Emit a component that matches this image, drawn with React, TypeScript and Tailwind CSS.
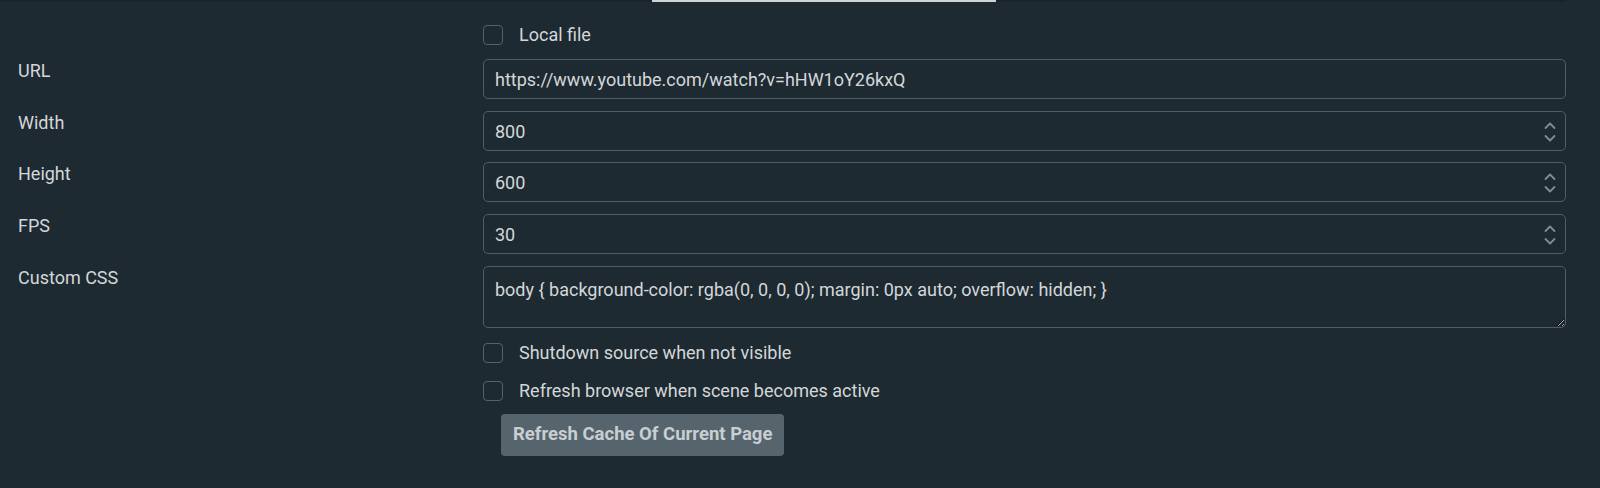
import React from "react";

function Checkbox() {
  return <span className="block w-[20px] h-[20px] rounded-[4px] border-[1.5px] border-[#52626a] shrink-0" />;
}

function Spinner() {
  return (
    <svg width="12" height="20" viewBox="0 0 12 20" className="absolute right-[9px] top-[10px]" fill="none" stroke="#808d93" strokeWidth="1.8" strokeLinecap="round" strokeLinejoin="round">
      <path d="M1.5 6 L6 1.5 L10.5 6" />
      <path d="M1.5 14 L6 18.5 L10.5 14" />
    </svg>
  );
}

function Row({ label, children, className = "" }: { label?: string; children: React.ReactNode; className?: string }) {
  return (
    <div className={`grid grid-cols-[483px_1fr] ${className}`}>
      <div className="pl-[18px] pt-[1.5px] leading-[20px] text-[18px] text-[#d3d7d9]">{label}</div>
      <div>{children}</div>
    </div>
  );
}

function NumberField({ value }: { value: string }) {
  return (
    <div className="relative h-[40px] rounded-[5px] border-[1.5px] border-[#4f5e66] flex items-center pl-[11px] text-[18px] text-[#d3d7d9]">
      {value}
      <Spinner />
    </div>
  );
}

function CheckRow({ text, className = "" }: { text: string; className?: string }) {
  return (
    <Row className={className}>
      <div className="flex items-center gap-[16px] h-[20px]">
        <Checkbox />
        <span className="text-[18px] text-[#d3d7d9] leading-[20px]">{text}</span>
      </div>
    </Row>
  );
}

export default function App() {
  return (
    <div className="w-full h-[488px] bg-[#1e2a32] font-['Roboto',sans-serif] overflow-hidden pr-[34px]">
      <div className="h-[2px] bg-[#18232a] flex">
        <div className="ml-[652px] w-[344px] h-[2px] bg-[#cfd3d6]" />
      </div>
      <CheckRow text="Local file" className="mt-[23px]" />
      <Row label="URL" className="mt-[14px]">
        <div className="h-[40px] rounded-[5px] border-[1.5px] border-[#4f5e66] flex items-center pl-[11px] text-[18px] text-[#d3d7d9]">
          https://www.youtube.com/watch?v=hHW1oY26kxQ
        </div>
      </Row>
      <Row label="Width" className="mt-[12px]">
        <NumberField value="800" />
      </Row>
      <Row label="Height" className="mt-[11px]">
        <NumberField value="600" />
      </Row>
      <Row label="FPS" className="mt-[12px]">
        <NumberField value="30" />
      </Row>
      <Row label="Custom CSS" className="mt-[12px]">
        <textarea
          readOnly
          defaultValue="body { background-color: rgba(0, 0, 0, 0); margin: 0px auto; overflow: hidden; }"
          className="block w-full h-[62px] rounded-[5px] border-[1.5px] border-[#4f5e66] bg-transparent pl-[11px] pt-[13px] text-[18px] leading-[20px] text-[#d3d7d9] resize-y outline-none"
        />
      </Row>
      <CheckRow text="Shutdown source when not visible" className="mt-[15px]" />
      <CheckRow text="Refresh browser when scene becomes active" className="mt-[18px]" />
      <Row className="mt-[13px]">
        <button className="ml-[18px] h-[42px] px-[12px] rounded-[4px] bg-[#56656d] text-[18.5px] font-bold text-[#c8ced1]">
          Refresh Cache Of Current Page
        </button>
      </Row>
    </div>
  );
}
